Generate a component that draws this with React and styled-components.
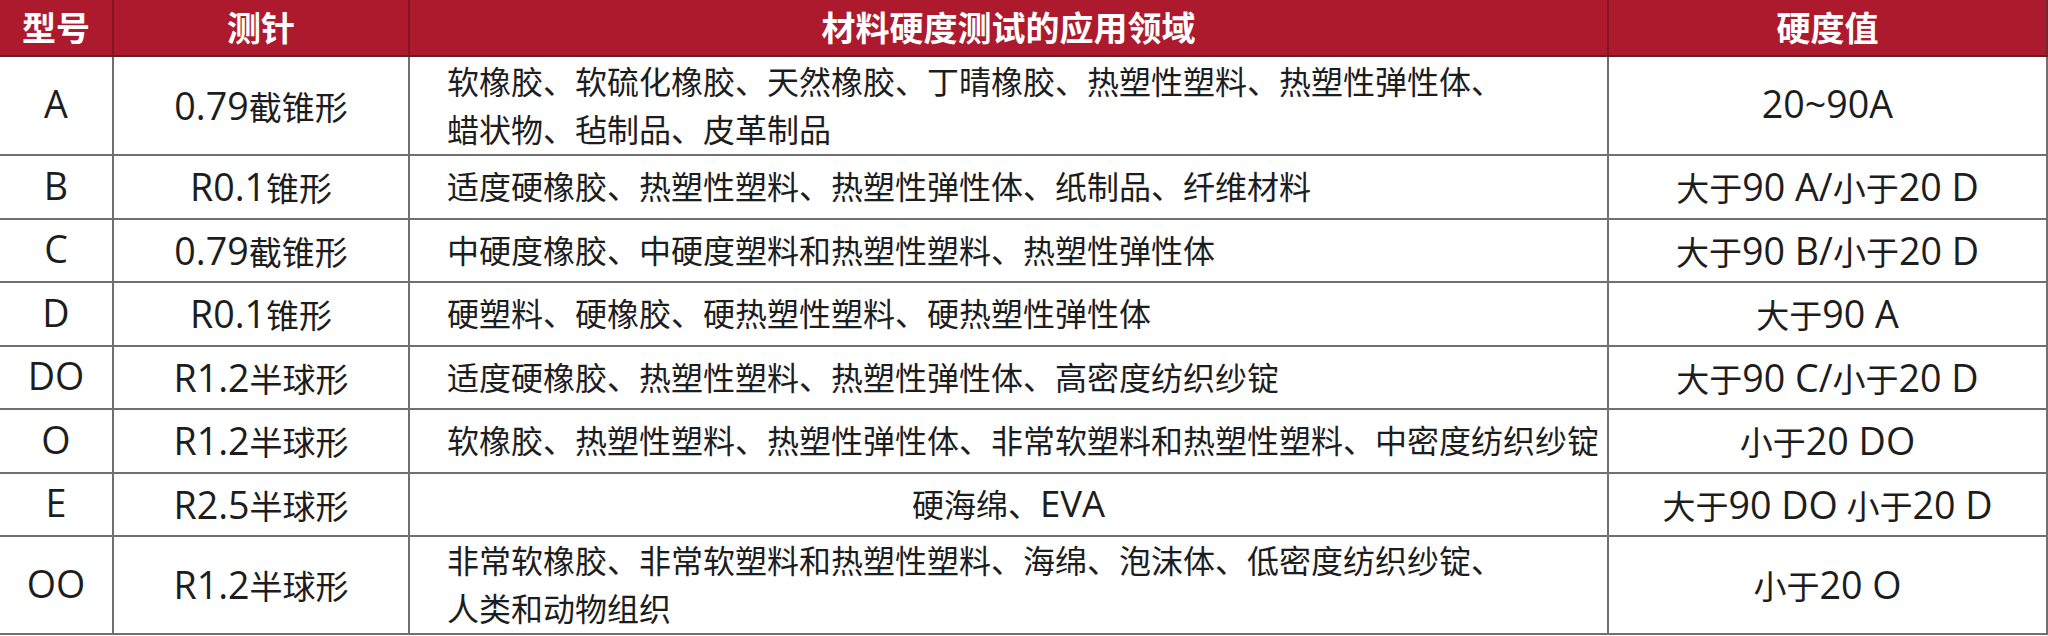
import React from 'react'
import styled, { createGlobalStyle } from 'styled-components'

const GlobalStyle = createGlobalStyle`
  html, body {
    margin: 0;
    padding: 0;
    background: #ffffff;
  }
  body {
    font-family: "Open Sans", "Noto Sans CJK SC", sans-serif;
  }
`;

const rows = [
  { type: 'A', probe: '0.79截锥形', use: ['软橡胶、软硫化橡胶、天然橡胶、丁晴橡胶、热塑性塑料、热塑性弹性体、', '蜡状物、毡制品、皮革制品'], value: '20~90A' },
  { type: 'B', probe: 'R0.1锥形', use: ['适度硬橡胶、热塑性塑料、热塑性弹性体、纸制品、纤维材料'], value: '大于90 A/小于20 D' },
  { type: 'C', probe: '0.79截锥形', use: ['中硬度橡胶、中硬度塑料和热塑性塑料、热塑性弹性体'], value: '大于90 B/小于20 D' },
  { type: 'D', probe: 'R0.1锥形', use: ['硬塑料、硬橡胶、硬热塑性塑料、硬热塑性弹性体'], value: '大于90 A' },
  { type: 'DO', probe: 'R1.2半球形', use: ['适度硬橡胶、热塑性塑料、热塑性弹性体、高密度纺织纱锭'], value: '大于90 C/小于20 D' },
  { type: 'O', probe: 'R1.2半球形', use: ['软橡胶、热塑性塑料、热塑性弹性体、非常软塑料和热塑性塑料、中密度纺织纱锭'], value: '小于20 DO' },
  { type: 'E', probe: 'R2.5半球形', use: ['硬海绵、EVA'], value: '大于90 DO 小于20 D', centered: true },
  { type: 'OO', probe: 'R1.2半球形', use: ['非常软橡胶、非常软塑料和热塑性塑料、海绵、泡沫体、低密度纺织纱锭、', '人类和动物组织'], value: '小于20 O' },
];

// latin runs are set a bit larger than the cjk ones, like the source table
function Mixed({ text }) {
  const parts = text.split(/([A-Za-z0-9.~\/]+(?: [A-Za-z0-9.~\/]+)*)/);
  return (
    <span>
      {parts.map((p, i) =>
        i % 2 === 1 ? <Latin key={i}>{p}</Latin> : <React.Fragment key={i}>{p}</React.Fragment>
      )}
    </span>
  );
}

function App() {
  return (
    <>
      <GlobalStyle />
      <Page>
        <Table>
          <HeadCell>型号</HeadCell>
          <HeadCell>测针</HeadCell>
          <HeadCell>材料硬度测试的应用领域</HeadCell>
          <HeadCell $last>硬度值</HeadCell>

          {rows.map((r) => (
            <React.Fragment key={r.type}>
              <Cell><Mixed text={r.type} /></Cell>
              <Cell><Mixed text={r.probe} /></Cell>
              <UseCell $centered={r.centered}>
                {r.use.map((line, i) => (
                  <Line key={i}><Mixed text={line} /></Line>
                ))}
              </UseCell>
              <Cell><Mixed text={r.value} /></Cell>
            </React.Fragment>
          ))}
        </Table>
      </Page>
    </>
  )
}

export default App;


const Page = styled.div`
  width: 2048px;
  height: 636px;
  overflow: hidden;
  background: #ffffff;
`;

const Table = styled.div`
  display: grid;
  grid-template-columns: 114px 296px 1199px 439px;
  grid-template-rows: 57px 99px 64px 63px 64px 63px 64px 63px 98px;
  color: #1d1d1d;
`;

const HeadCell = styled.div`
  display: flex;
  align-items: center;
  justify-content: center;
  box-sizing: border-box;
  background-color: #ad1a2e;
  border-right: 2px solid ${(p) => (p.$last ? '#6a2a30' : '#7e1623')};
  border-bottom: 2px solid #5e2127;
  color: #ffffff;
  font-family: "Noto Sans CJK SC", sans-serif;
  font-weight: 700;
  font-size: 34px;
  padding-bottom: 3px;
`;

const Cell = styled.div`
  display: flex;
  align-items: center;
  justify-content: center;
  box-sizing: border-box;
  border-right: 2px solid #707070;
  border-bottom: 2px solid #707070;
  font-size: 33px;
  white-space: nowrap;
`;

const UseCell = styled(Cell)`
  flex-direction: column;
  align-items: ${(p) => (p.$centered ? 'center' : 'flex-start')};
  padding-left: ${(p) => (p.$centered ? '0' : '37px')};
  font-size: 32px;
`;

const Line = styled.div`
  line-height: 48px;
`;

const Latin = styled.span`
  font-family: "Open Sans", sans-serif;
  font-size: 1.14em;
  line-height: 1;
`;
